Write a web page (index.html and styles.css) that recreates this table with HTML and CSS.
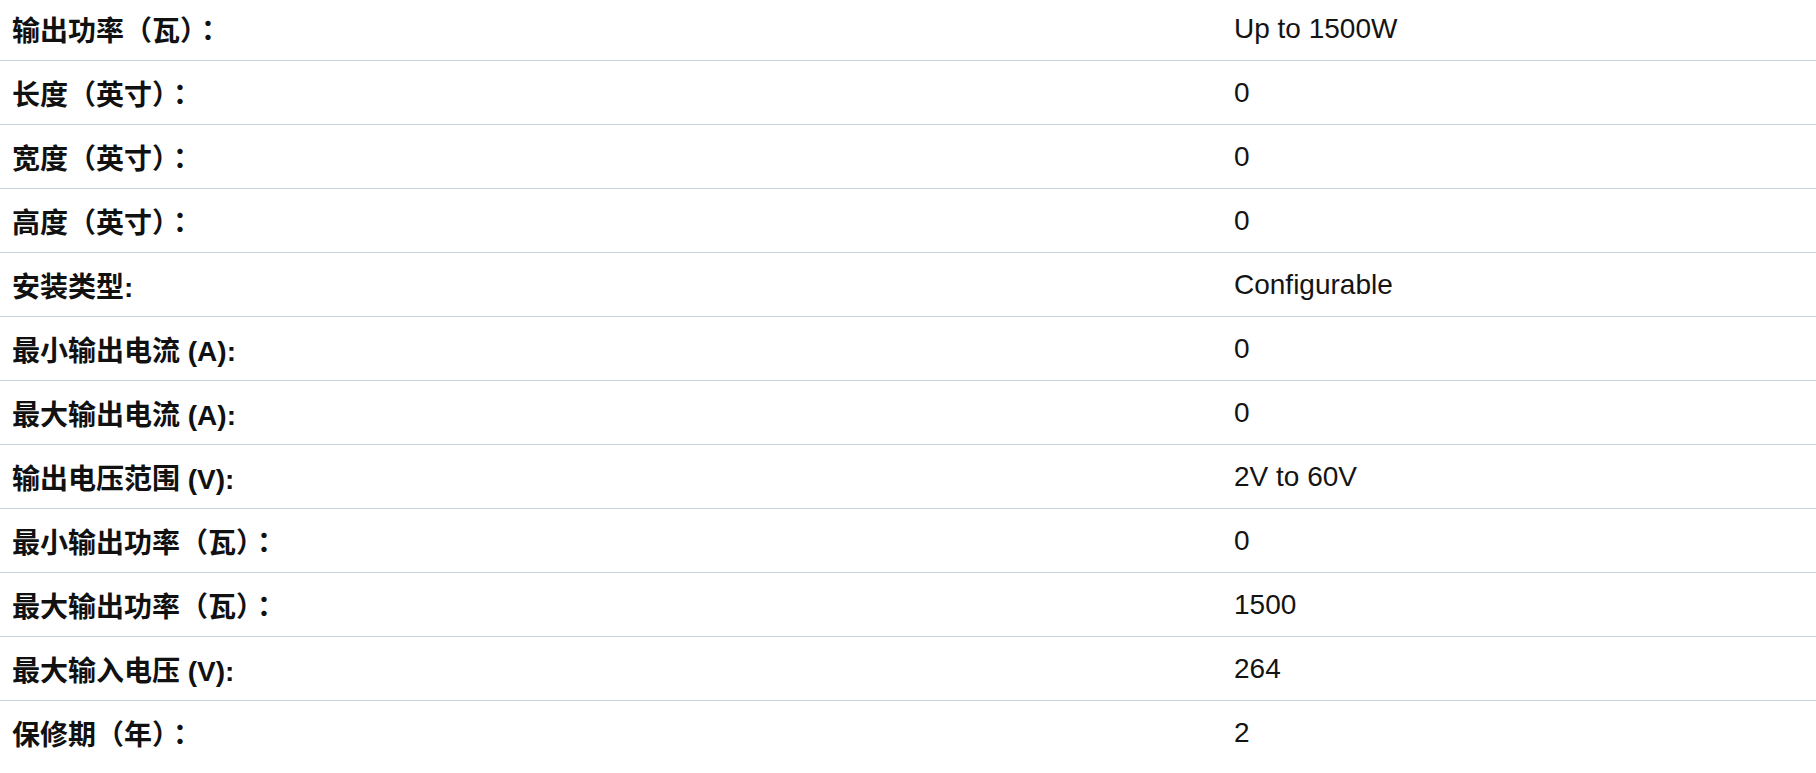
FILE: index.html
```html
<!DOCTYPE html>
<html lang="zh-CN">
<head>
<meta charset="utf-8">
<title>规格</title>
<link rel="stylesheet" href="styles.css">
</head>
<body>
<div class="specs">
  <div class="row"><div class="label">输出功率（瓦）<span class="colon" lang="zh-TW">：</span></div><div class="value">Up to 1500W</div></div>
  <div class="row"><div class="label">长度（英寸）<span class="colon" lang="zh-TW">：</span></div><div class="value">0</div></div>
  <div class="row"><div class="label">宽度（英寸）<span class="colon" lang="zh-TW">：</span></div><div class="value">0</div></div>
  <div class="row"><div class="label">高度（英寸）<span class="colon" lang="zh-TW">：</span></div><div class="value">0</div></div>
  <div class="row"><div class="label">安装类型:</div><div class="value">Configurable</div></div>
  <div class="row"><div class="label">最小输出电流 (A):</div><div class="value">0</div></div>
  <div class="row"><div class="label">最大输出电流 (A):</div><div class="value">0</div></div>
  <div class="row"><div class="label">输出电压范围 (V):</div><div class="value">2V to 60V</div></div>
  <div class="row"><div class="label">最小输出功率（瓦）<span class="colon" lang="zh-TW">：</span></div><div class="value">0</div></div>
  <div class="row"><div class="label">最大输出功率（瓦）<span class="colon" lang="zh-TW">：</span></div><div class="value">1500</div></div>
  <div class="row"><div class="label">最大输入电压 (V):</div><div class="value">264</div></div>
  <div class="row"><div class="label">保修期（年）<span class="colon" lang="zh-TW">：</span></div><div class="value">2</div></div>
</div>
</body>
</html>
```

FILE: styles.css
```css
html, body {
  margin: 0;
  padding: 0;
  background: #ffffff;
}

body {
  font-family: "Liberation Sans", Arial, "Noto Sans CJK SC", sans-serif;
  font-size: 28px;
  color: #111111;
  overflow: hidden;
}

.specs {
  margin-top: -3px;
}

.row {
  display: grid;
  grid-template-columns: 1222px 1fr;
  align-items: center;
  height: 63px;
  border-bottom: 1px solid #cbd5e2;
}

.row:last-child {
  border-bottom: none;
}

.label {
  padding-left: 12px;
  font-weight: 700;
  color: #111111;
  white-space: nowrap;
}

.colon {
  font-family: "Noto Sans CJK TC", "Noto Sans CJK SC", sans-serif;
}

.value {
  padding-left: 12px;
  font-weight: 400;
  color: #141414;
  white-space: nowrap;
}
```
